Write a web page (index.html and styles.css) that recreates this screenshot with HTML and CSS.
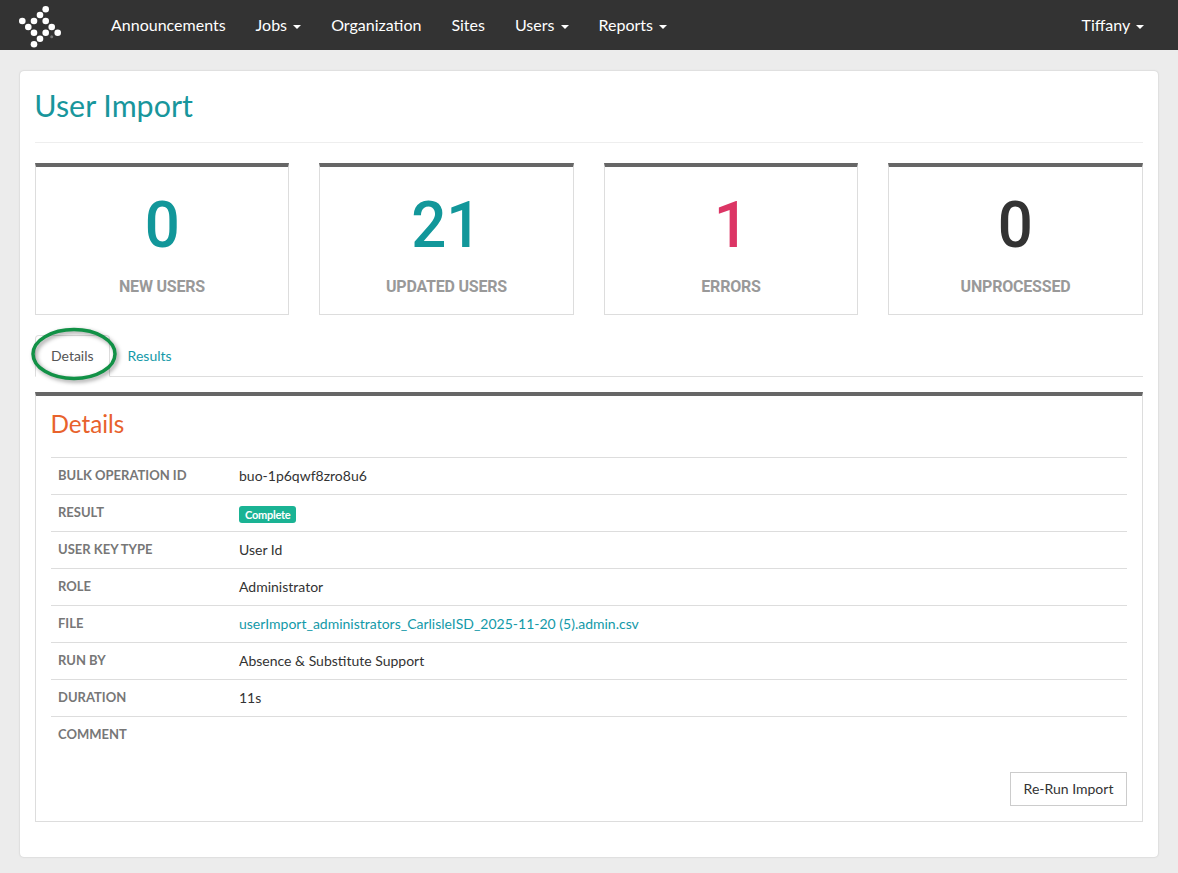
FILE: index.html
```html
<!DOCTYPE html>
<html lang="en">
<head>
<meta charset="utf-8">
<title>User Import</title>
<link rel="stylesheet" href="styles.css">
</head>
<body>
<nav class="navbar">
  <svg class="logo" width="44" height="44" viewBox="19 5 44 44" fill="#fff">
    <circle cx="45.7" cy="9.3" r="3.3"/><circle cx="40" cy="15" r="3.3"/><circle cx="34" cy="21" r="3.3"/>
    <circle cx="22.3" cy="21" r="3.3"/><circle cx="45.7" cy="21" r="3.3"/><circle cx="28.3" cy="27" r="3.3"/>
    <circle cx="51.7" cy="27" r="3.3"/><circle cx="34" cy="32.7" r="3.3"/><circle cx="45.7" cy="32.7" r="3.3"/>
    <circle cx="57.7" cy="32.7" r="3.3"/><circle cx="40" cy="38.7" r="3.3"/><circle cx="34" cy="44.3" r="3.3"/>
    <circle class="logo-dim" cx="51.7" cy="36.7" r="1.5"/>
  </svg>
  <ul class="nav-items">
    <li>Announcements</li>
    <li>Jobs <span class="caret"></span></li>
    <li>Organization</li>
    <li>Sites</li>
    <li>Users <span class="caret"></span></li>
    <li>Reports <span class="caret"></span></li>
  </ul>
  <div class="nav-user">Tiffany <span class="caret"></span></div>
</nav>
<main class="page">
  <h1 class="title">User Import</h1>
  <section class="stats">
    <div class="stat"><div class="num teal">0</div><div class="label">NEW USERS</div></div>
    <div class="stat"><div class="num teal">21</div><div class="label">UPDATED USERS</div></div>
    <div class="stat"><div class="num pink">1</div><div class="label">ERRORS</div></div>
    <div class="stat"><div class="num dark">0</div><div class="label">UNPROCESSED</div></div>
  </section>
  <div class="tabs">
    <a class="tab active">Details</a>
    <a class="tab">Results</a>
    <svg class="circle" width="90" height="58" viewBox="0 0 90 58">
      <ellipse class="circle-line" cx="44" cy="27" rx="41" ry="24.5"/>
    </svg>
  </div>
  <section class="panel">
    <h2 class="panel-title">Details</h2>
    <table class="details">
      <tr><th>BULK OPERATION ID</th><td>buo-1p6qwf8zro8u6</td></tr>
      <tr><th>RESULT</th><td><span class="badge">Complete</span></td></tr>
      <tr><th>USER KEY TYPE</th><td>User Id</td></tr>
      <tr><th>ROLE</th><td>Administrator</td></tr>
      <tr><th>FILE</th><td><a class="link">userImport_administrators_CarlisleISD_2025-11-20 (5).admin.csv</a></td></tr>
      <tr><th>RUN BY</th><td>Absence &amp; Substitute Support</td></tr>
      <tr><th>DURATION</th><td>11s</td></tr>
      <tr><th>COMMENT</th><td></td></tr>
    </table>
    <div class="actions"><button class="btn">Re-Run Import</button></div>
  </section>
</main>
</body>
</html>
```
FILE: styles.css
```css
* { box-sizing: border-box; }
html, body { margin: 0; height: 100%; }
body {
  background: #ececec;
  font-family: Lato, "Liberation Sans", sans-serif;
  font-size: 14px;
  line-height: 20px;
  color: #333;
  overflow: hidden;
}
.navbar {
  height: 50px;
  background: #333;
  color: #fff;
  display: flex;
  align-items: center;
  padding: 0 19px;
}
.logo { flex: none; margin-top: 4px; }
.logo-dim { fill: #777; }
.nav-items {
  list-style: none;
  display: flex;
  gap: 30px;
  margin: 0 0 0 48px;
  padding: 0;
  font-size: 16px;
}
.nav-user { margin-left: auto; margin-right: 15px; font-size: 16px; }
.caret {
  display: inline-block;
  width: 0;
  height: 0;
  margin-left: 2px;
  vertical-align: middle;
  border-top: 4px solid #fff;
  border-left: 4px solid transparent;
  border-right: 4px solid transparent;
}
.page {
  margin: 21px 20px 0;
  height: 786px;
  background: #fff;
  border-radius: 4px;
  box-shadow: 0 0 2px rgba(0,0,0,.2);
  padding: 15px;
}
.title {
  margin: 0;
  height: 57px;
  border-bottom: 1px solid #eee;
  font-size: 30.4px;
  line-height: 38px;
  font-weight: 400;
  text-indent: -.7px;
  color: #18969c;
}
.stats {
  display: grid;
  grid-template-columns: repeat(4, 1fr);
  gap: 30px;
  margin: 20px .25px 0 -.25px;
}
.stat {
  height: 152px;
  border: 1px solid #ddd;
  border-top: 4px solid #666;
  text-align: center;
}
.num {
  font-family: Roboto, sans-serif;
  font-weight: 500;
  font-size: 65px;
  line-height: 76px;
  margin-top: 20px;
  transform: scaleX(.95);
}
.teal { color: #12979a; }
.pink { color: #dc3565; }
.dark { color: #333; }
.label {
  font-family: Roboto, sans-serif;
  font-weight: 700;
  font-size: 16px;
  line-height: 20px;
  letter-spacing: -.2px;
  margin-top: 14px;
  color: #999;
}
.tabs {
  position: relative;
  display: flex;
  height: 42px;
  margin-top: 20px;
  border-bottom: 1px solid #ddd;
  font-size: 14px;
}
.tab {
  display: block;
  height: 42px;
  padding: 11px 16px;
  color: #1399a8;
  margin-right: 2px;
}
.tab.active {
  color: #555;
  background: #fff;
  border: 1px solid #ddd;
  border-bottom-color: #fff;
  border-radius: 4px 4px 0 0;
  padding: 10px 15px;
}
.circle {
  position: absolute;
  left: -5px;
  top: -8px;
  overflow: visible;
}
.circle-line {
  fill: none;
  stroke: #119146;
  stroke-width: 3.5;
  filter: drop-shadow(2px 2px 2px rgba(0,0,0,.4));
}
.panel {
  margin-top: 15px;
  height: 430px;
  border: 1px solid #ddd;
  border-top: 4px solid #666;
  padding: 13px 15px 15px;
}
.panel-title {
  margin: 0 0 18px;
  font-size: 24.3px;
  line-height: 30px;
  font-weight: 400;
  text-indent: -.6px;
  color: #e8622c;
}
.details {
  width: 100%;
  border-collapse: collapse;
  table-layout: fixed;
}
.details tr { height: 37px; border-top: 1px solid #ddd; }
.details th {
  width: 188px;
  padding: 7px;
  text-align: left;
  vertical-align: top;
  font-size: 13px;
  font-weight: 700;
  color: #777;
  white-space: nowrap;
}
.details td { padding: 8px 0 7px 0; vertical-align: top; }
.link { color: #1399a8; }
.badge {
  display: inline-block;
  background: #1ab394;
  color: #fff;
  font-size: 11px;
  font-weight: 700;
  line-height: 11px;
  letter-spacing: -.25px;
  padding: 3px 6px;
  border-radius: 3px;
  vertical-align: -1px;
}
.actions { display: flex; justify-content: flex-end; margin-top: 18px; }
.btn {
  font: inherit;
  height: 34px;
  width: 117px;
  padding: 0;
  color: #333;
  background: #fff;
  border: 1px solid #ccc;
}
```
